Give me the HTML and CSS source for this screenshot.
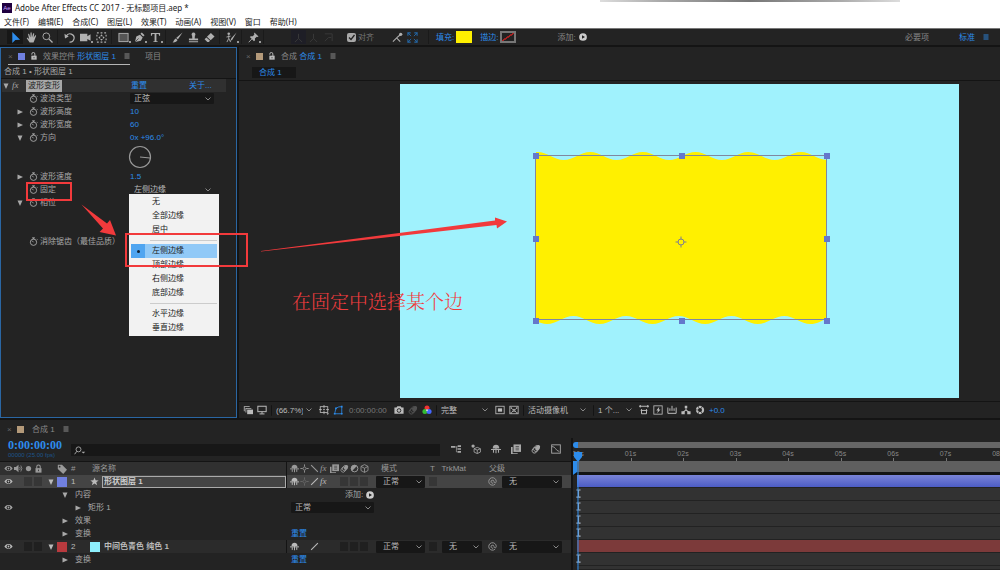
FILE: index.html
```
<!DOCTYPE html>
<html lang="zh-CN">
<head>
    <meta charset="UTF-8">
    <meta name="viewport" content="width=device-width, initial-scale=1.0">
    <title>Adobe After Effects CC 2017 - 无标题项目.aep *</title>
    <link rel="stylesheet" href="styles.css">
</head>
<body>
    <!-- Icon sprite -->
    <svg class="sprite" aria-hidden="true">
        <symbol id="i-arrow" viewBox="0 0 12 12"><path d="M2.500 0v12l3.300-3.200 5.200-.3z" fill="currentColor"/></symbol>
        <symbol id="i-hand" viewBox="0 0 12 12"><path d="M4 11.5L1 7.2c-.4-.8.6-1.3 1.2-.6L3.5 8 2.3 2.8c-.1-.9.9-1.1 1.2-.3L4.800 6 4.900 1c.1-.9 1.200-.9 1.300 0L6.500 5.800 7.800 1.700c.3-.8 1.300-.5 1.200.3L8.300 6.400l1.600-2.500c.5-.7 1.400-.2 1 .6L9.200 9l-1 2.500z" fill="currentColor"/></symbol>
        <symbol id="i-zoom" viewBox="0 0 12 12"><circle cx="4.700" cy="4.700" r="3.700" fill="none" stroke="currentColor"/><path d="M7.500 7.500l4 4" stroke="currentColor" stroke-width="1.500"/></symbol>
        <symbol id="i-rotate" viewBox="0 0 12 12"><path d="M2.500 4.500A4.500 4.500 0 1 1 6 11" fill="none" stroke="currentColor" stroke-width="1.300"/><path d="M.5 2l.6 5 4-2z" fill="currentColor"/></symbol>
        <symbol id="i-camera" viewBox="0 0 12 12"><path d="M0 2h8v2.500l3.500-2v7L8 7.500V10H0z" fill="currentColor"/></symbol>
        <symbol id="i-anchor" viewBox="0 0 12 12"><rect x="1" y="1" width="10" height="10" fill="none" stroke="currentColor" stroke-width="1.200" stroke-dasharray="2 2"/><path d="M6 2.500l1.500 2h-3zM6 9.500l1.500-2h-3zM2.500 6l2-1.500v3zM9.500 6l-2-1.500v3z" fill="currentColor"/></symbol>
        <symbol id="i-rect" viewBox="0 0 12 12"><rect x="1" y="1.500" width="10" height="9" fill="#555" stroke="currentColor"/></symbol>
        <symbol id="i-pen" viewBox="0 0 12 12"><path d="M1 11l1.500-6 4-2 3 3-2 3.500z" fill="currentColor"/><path d="M7 2l1.500-1.500 3 3L10 5z" fill="currentColor"/><path d="M1 11l4-4" stroke="#232323" stroke-width=".7"/></symbol>
        <symbol id="i-type" viewBox="0 0 12 12"><path d="M1 1h10v3h-1l-.6-1.700H7v7.700l1.500.4v.6h-5v-.6l1.500-.4V2.300H2.600L2 4H1z" fill="currentColor"/></symbol>
        <symbol id="i-brush" viewBox="0 0 12 12"><path d="M11.500.5L6.500 8 4.500 6.500zM4 7l2 1.700C5.500 10.800 3 11.500.5 11.300 2 10.500 2 8 4 7z" fill="currentColor"/></symbol>
        <symbol id="i-stamp" viewBox="0 0 12 12"><path d="M6 .5a2.200 2.200 0 0 1 1.500 3.700L7.300 7H11v2H1V7h3.700l-.2-2.800A2.200 2.200 0 0 1 6 .5zM1 10h10v1.200H1z" fill="currentColor"/></symbol>
        <symbol id="i-eraser" viewBox="0 0 12 12"><path d="M7.500 1l4 3.800L7.300 9 3.200 5.200z" fill="currentColor"/><path d="M2.600 5.900l4 3.700L5.200 11H3.600L.6 8z" fill="currentColor"/></symbol>
        <symbol id="i-roto" viewBox="0 0 12 12"><path d="M11.500.5L7.200 8l-3 2.500 1.800-4z" fill="currentColor"/><circle cx="3" cy="2" r="1.400" fill="currentColor"/><path d="M3 3.500V7L1 11M3 7l2 4M.5 5.500L5 4.500" stroke="currentColor" fill="none"/></symbol>
        <symbol id="i-pin" viewBox="0 0 12 12"><path d="M7 .5l4.500 4.300-1.300.6-.7-.3L7.500 7l.2 2L6.500 10 2 5.500l1-1 2.200.2L7 2.600l-.4-.8z" fill="currentColor"/><path d="M4.300 7.500L.8 11.200" stroke="currentColor"/></symbol>
        <symbol id="i-axes" viewBox="0 0 12 12"><path d="M6 2v5L2 11M6 7l4 4" stroke="currentColor" fill="none"/></symbol>
        <symbol id="i-world" viewBox="0 0 12 12"><path d="M2 2h8v8M2 10l4-4h3" stroke="currentColor" fill="none"/></symbol>
        <symbol id="i-snap" viewBox="0 0 12 12"><path d="M1 10.500L5 6.500l4 4M5 6.500L9 3" stroke="currentColor" stroke-width="1.200" fill="none"/><circle cx="9.500" cy="2.500" r="1.800" fill="currentColor"/></symbol>
        <symbol id="i-frame" viewBox="0 0 12 12"><path d="M1 4V1h3M8 1h3v3M11 8v3H8M4 11H1V8" fill="none" stroke="currentColor" stroke-width="1.200"/><path d="M1 1l3.500 3.500M11 1L7.500 4.500M1 11l3.500-3.500M11 11L7.500 7.500" stroke="currentColor"/></symbol>
        <symbol id="i-play" viewBox="0 0 12 12"><circle cx="6" cy="6" r="5.800" fill="currentColor"/><path d="M4.500 3.300v5.400L9 6z" fill="#232323"/></symbol>
        <symbol id="i-menu" viewBox="0 0 12 12"><path d="M1 2h10M1 6h10M1 10h10" stroke="currentColor" stroke-width="1.800"/></symbol>
        <symbol id="i-unlock" viewBox="0 0 12 12"><rect x="2" y="5.500" width="8" height="6" fill="currentColor"/><path d="M2.700 4V3a2.300 2.300 0 0 1 4.600 0v3" fill="none" stroke="currentColor" stroke-width="1.400"/><path d="M6 7.500v2" stroke="#232323"/></symbol>
        <symbol id="i-lock" viewBox="0 0 12 12"><rect x="2" y="5.500" width="8" height="6" fill="currentColor"/><path d="M3.700 6V3.500a2.300 2.300 0 0 1 4.600 0V6" fill="none" stroke="currentColor" stroke-width="1.400"/><path d="M6 7.500v2" stroke="#232323"/></symbol>
        <symbol id="i-right" viewBox="0 0 12 12"><path d="M1 1v10L12 6z" fill="currentColor"/></symbol>
        <symbol id="i-down" viewBox="0 0 12 12"><path d="M1 1h10L6 12z" fill="currentColor"/></symbol>
        <symbol id="i-watch" viewBox="0 0 12 12"><circle cx="6" cy="7" r="4.200" fill="none" stroke="currentColor" stroke-width="1.200"/><path d="M4 1.200h4M6 1v2M6 7L4 4.800M10.200 2.500l1 1" stroke="currentColor" stroke-width="1.200"/></symbol>
        <symbol id="i-layers" viewBox="0 0 12 12"><path d="M1 1.500h7v1H2v5H1z" fill="currentColor"/><path d="M3 3.500h7v1H4v4.500H3z" fill="currentColor"/><path d="M5 5.500h7V11H5z" fill="currentColor"/></symbol>
        <symbol id="i-monitor" viewBox="0 0 12 12"><rect x="1" y="1.500" width="10" height="6.500" fill="none" stroke="currentColor" stroke-width="1.200"/><path d="M6 8v2.500M3 10.700h6" stroke="currentColor" stroke-width="1.200"/></symbol>
        <symbol id="i-grid" viewBox="0 0 12 12"><rect x="1.500" y="2" width="9" height="7" fill="none" stroke="currentColor"/><path d="M6 0v4M6 7v4M0 5.500h3.500M8.500 5.500H12M4.800 5.500h2.400" stroke="currentColor"/><path d="M9 10h3l-1.500 2z" fill="currentColor"/></symbol>
        <symbol id="i-mask" viewBox="0 0 12 12"><path d="M2 10.500L3.500 4Q7 1.500 10.500 2v8.500z" fill="none" stroke="currentColor"/><path d="M1 9.500h2v2H1zM9.500 9.500h2v2h-2zM9.500 1h2v2h-2zM2.500 3h2v2h-2z" fill="currentColor"/></symbol>
        <symbol id="i-photo" viewBox="0 0 12 12"><path d="M.5 3H3l1-1.500h4L9 3h2.500v7.500H.5z" fill="currentColor"/><circle cx="6" cy="6.600" r="2.200" fill="none" stroke="#232323" stroke-width="1.100"/></symbol>
        <symbol id="i-blur" viewBox="0 0 12 12"><ellipse cx="4.500" cy="7.500" rx="3" ry="3.600" fill="none" stroke="currentColor" transform="rotate(35 4.500 7.500)"/><ellipse cx="6.500" cy="5.500" rx="3" ry="3.800" fill="none" stroke="currentColor" transform="rotate(35 6.500 5.500)"/><ellipse cx="8" cy="4.500" rx="2.400" ry="3.500" fill="currentColor" transform="rotate(35 8 4.500)"/></symbol>
        <symbol id="i-rgb" viewBox="0 0 12 12"><circle cx="6" cy="3.500" r="3" fill="#e33"/><circle cx="3.500" cy="7.700" r="3" fill="#3b3"/><circle cx="8.500" cy="7.700" r="3" fill="#46f"/><circle cx="6" cy="6.300" r="1.100" fill="#ddd"/></symbol>
        <symbol id="i-roi" viewBox="0 0 12 12"><rect x="1" y="1.500" width="10" height="9" fill="none" stroke="currentColor"/><rect x="3.500" y="4" width="5" height="4" fill="currentColor"/></symbol>
        <symbol id="i-checker" viewBox="0 0 12 12"><rect x="1" y="1.500" width="10" height="9" fill="none" stroke="currentColor"/><path d="M2 3l8 7M10 3l-8 7" stroke="currentColor" stroke-width="1.500" stroke-dasharray="2 1"/></symbol>
        <symbol id="i-aspect" viewBox="0 0 12 12"><path d="M0 1.500h12M1.500 0v3M10.500 0v3M2 6.500h8M3 5v5.500h6V5" fill="none" stroke="currentColor" stroke-width="1.200"/></symbol>
        <symbol id="i-fast" viewBox="0 0 12 12"><rect x="1" y="1" width="10" height="10" fill="none" stroke="currentColor"/><path d="M7.500 2L4 6.500h2L5 10l4-4.500H7z" fill="currentColor"/></symbol>
        <symbol id="i-chart" viewBox="0 0 12 12"><path d="M1 3v7h10V3M3.500 7V4M6 7V1M8.500 7V4" fill="none" stroke="currentColor" stroke-width="1.200"/></symbol>
        <symbol id="i-flow" viewBox="0 0 12 12"><path d="M4.500 1h3v3h-3zM.5 7.500h4V11h-4zM7.500 7.500h4V11h-4z" fill="currentColor"/><path d="M6 4v2L2.500 8.500M6 6l3.500 2.500" fill="none" stroke="currentColor" stroke-width="1.300"/></symbol>
        <symbol id="i-aperture" viewBox="0 0 12 12"><circle cx="6" cy="6" r="3.700" fill="none" stroke="currentColor" stroke-width="2.600" stroke-dasharray="3.200 .7"/></symbol>
        <symbol id="i-search" viewBox="0 0 16 12"><circle cx="6" cy="4.500" r="3.300" fill="none" stroke="currentColor" stroke-width="1.200"/><path d="M3.800 7L.8 11" stroke="currentColor" stroke-width="1.300"/><path d="M10 7.500h5L12.500 10z" fill="currentColor"/></symbol>
        <symbol id="i-mini" viewBox="0 0 12 12"><path d="M0 2.500h5v2H0zM8 1.500h4v2H8zM8 5h4v2H8zM8 8.500h4v2H8z" fill="currentColor"/><path d="M5 3.500h3M6.500 3v6.500H8M6.500 6H8" fill="none" stroke="currentColor" stroke-width=".8"/></symbol>
        <symbol id="i-draft" viewBox="0 0 12 12"><circle cx="2.500" cy="2.500" r="2" fill="currentColor"/><path d="M7.500 4l3.800 1.700v4L7.500 11.500 3.700 9.700v-4zM3.700 5.700l3.800 1.600 3.800-1.600M7.500 7.300v4.200" fill="none" stroke="currentColor"/></symbol>
        <symbol id="i-shy" viewBox="0 0 12 12"><path d="M2 5.500C2 2 4 1 6 1s4 1 4 4.500z" fill="currentColor"/><path d="M0 6.500h12M6 2v9M3 7v3.500M9 7v3.500" stroke="currentColor" stroke-width="1.300"/></symbol>
        <symbol id="i-blend" viewBox="0 0 12 12"><path d="M0 3.500h2V11h6v1H0z" fill="currentColor"/><rect x="3" y="0.500" width="9" height="9" fill="currentColor"/><path d="M5.500 3h4M5.500 5h4M5.500 7h4" stroke="#232323" stroke-width=".7"/></symbol>
        <symbol id="i-graph" viewBox="0 0 12 12"><rect x=".8" y="1" width="10.400" height="10" fill="none" stroke="currentColor" stroke-width="1.100"/><path d="M1 3c5 0 4 5 9 6" fill="none" stroke="currentColor"/></symbol>
        <symbol id="i-eye" viewBox="0 0 12 12"><path d="M.5 6C3 1.600 9 1.600 11.500 6 9 10.400 3 10.400.5 6z" fill="currentColor"/><circle cx="6" cy="6" r="2.500" fill="#232323"/><circle cx="6" cy="6" r="1.200" fill="currentColor"/></symbol>
        <symbol id="i-sound" viewBox="0 0 12 12"><path d="M0 4h2.500L6 1v10L2.500 8H0z" fill="currentColor"/><path d="M7.500 4q1.500 2 0 4M9 2q3 4 0 8" fill="none" stroke="currentColor"/></symbol>
        <symbol id="i-dot" viewBox="0 0 12 12"><circle cx="6" cy="6" r="3.500" fill="currentColor"/></symbol>
        <symbol id="i-tag" viewBox="0 0 12 12"><path d="M1 1h5l6 6-4.500 5L1 6z" fill="currentColor"/><circle cx="3.200" cy="3.200" r="1" fill="#303030"/></symbol>
        <symbol id="i-sun" viewBox="0 0 12 12"><circle cx="6" cy="6" r="2" fill="none" stroke="currentColor"/><path d="M6 .5v3M6 8.500v3M.5 6h3M8.500 6h3" stroke="currentColor" stroke-width="1.200"/></symbol>
        <symbol id="i-back" viewBox="0 0 12 12"><path d="M1.500 1.500l9 9" stroke="currentColor" stroke-width="1.500"/></symbol>
        <symbol id="i-slash" viewBox="0 0 12 12"><path d="M1.500 10.500l9-9" stroke="currentColor" stroke-width="1.500"/></symbol>
        <symbol id="i-half" viewBox="0 0 12 12"><circle cx="6" cy="6" r="4.500" fill="none" stroke="currentColor" stroke-width="1.300"/><path d="M9.200 2.800A4.500 4.500 0 0 0 2.800 9.200z" fill="currentColor"/></symbol>
        <symbol id="i-cube" viewBox="0 0 12 12"><path d="M6 .8l4.700 2.400v5.500L6 11.200 1.300 8.700V3.200zM1.300 3.200L6 5.700l4.700-2.500M6 5.700v5.500" fill="none" stroke="currentColor" stroke-width="1.100"/></symbol>
        <symbol id="i-star" viewBox="0 0 12 12"><path d="M6 .5l1.500 3.800 4 .2-3.100 2.600 1.100 4L6 8.800 2.500 11.100l1.100-4L.5 4.500l4-.2z" fill="currentColor"/></symbol>
        <symbol id="i-whip" viewBox="0 0 12 12"><path d="M9.500 9.500A5 5 0 1 1 11 6c0 2.500-3 2.500-3 0a2 2 0 1 0-1 2" fill="none" stroke="currentColor" stroke-width="1.200"/></symbol>
        <symbol id="i-key" viewBox="0 0 6 10"><path d="M.5.7h5M.5 9.300h5M3 .7v8.600" stroke="currentColor" stroke-width="1.300"/></symbol>
    </svg>

    <header class="titlebar">
        <span class="logo">Ae</span>
        <h1>Adobe After Effects CC 2017 - 无标题项目.aep *</h1>
        <span class="window-edge"></span>
    </header>
    <nav class="menubar">
        <a href="#">文件(F)</a>
        <a href="#">编辑(E)</a>
        <a href="#">合成(C)</a>
        <a href="#">图层(L)</a>
        <a href="#">效果(T)</a>
        <a href="#">动画(A)</a>
        <a href="#">视图(V)</a>
        <a href="#">窗口</a>
        <a href="#">帮助(H)</a>
    </nav>

    <!-- Tools -->
    <div class="toolbar">
        <div class="tools">
            <button class="tool active" aria-label="选取"><svg><use href="#i-arrow"/></svg></button>
            <button class="tool" aria-label="手形"><svg><use href="#i-hand"/></svg></button>
            <button class="tool" aria-label="缩放"><svg><use href="#i-zoom"/></svg></button>
        </div>
        <div class="tools">
            <button class="tool" aria-label="旋转"><svg><use href="#i-rotate"/></svg></button>
            <button class="tool more" aria-label="摄像机"><svg><use href="#i-camera"/></svg></button>
            <button class="tool" aria-label="锚点"><svg><use href="#i-anchor"/></svg></button>
        </div>
        <div class="tools">
            <button class="tool more" aria-label="矩形"><svg><use href="#i-rect"/></svg></button>
            <button class="tool more" aria-label="钢笔"><svg><use href="#i-pen"/></svg></button>
            <button class="tool more" aria-label="文字"><svg><use href="#i-type"/></svg></button>
        </div>
        <div class="tools">
            <button class="tool" aria-label="画笔"><svg><use href="#i-brush"/></svg></button>
            <button class="tool" aria-label="仿制图章"><svg><use href="#i-stamp"/></svg></button>
            <button class="tool" aria-label="橡皮擦"><svg><use href="#i-eraser"/></svg></button>
        </div>
        <div class="tools">
            <button class="tool more" aria-label="Roto 笔刷"><svg><use href="#i-roto"/></svg></button>
        </div>
        <div class="tools">
            <button class="tool more" aria-label="操控点"><svg><use href="#i-pin"/></svg></button>
        </div>
        <div class="tools dim">
            <button class="tool active" aria-label="本地轴"><svg><use href="#i-axes"/></svg></button>
            <button class="tool" aria-label="世界轴"><svg><use href="#i-axes"/></svg></button>
            <button class="tool" aria-label="视图轴"><svg><use href="#i-world"/></svg></button>
        </div>
        <label class="snap"><input type="checkbox" checked>对齐</label>
        <div class="tools snap-tools">
            <button class="tool" aria-label="边缘"><svg><use href="#i-snap"/></svg></button>
            <button class="tool blue" aria-label="框架"><svg><use href="#i-frame"/></svg></button>
        </div>
        <div class="paint">
            <a href="#">填充:</a>
            <button class="swatch fill" aria-label="填充颜色"></button>
        </div>
        <div class="paint">
            <a href="#">描边:</a>
            <button class="swatch stroke" aria-label="描边颜色"></button>
        </div>
        <button class="add">添加:<svg><use href="#i-play"/></svg></button>
        <div class="workspaces">
            <button>必要项</button>
            <button class="blue">标准</button>
            <button class="blue" aria-label="工作区菜单"><svg><use href="#i-menu"/></svg></button>
        </div>
    </div>

    <main class="panels">
        <!-- Effect controls -->
        <section class="effects">
            <div class="tabs">
                <div class="tab current">
                    <span class="close">×</span>
                    <span class="chip violet"></span>
                    <svg class="icon"><use href="#i-unlock"/></svg>
                    <span>效果控件 <b>形状图层 1</b></span>
                    <svg class="icon menu"><use href="#i-menu"/></svg>
                </div>
                <div class="tab">项目</div>
            </div>
            <p class="source">合成 1 • 形状图层 1</p>

            <div class="fx-head">
                <svg class="twirl"><use href="#i-down"/></svg>
                <i class="fx">fx</i>
                <span><span class="fx-name">波形变形</span></span>
                <a href="#">重置</a>
                <a href="#">关于...</a>
            </div>
            <div class="prop">
                <i></i><svg class="icon"><use href="#i-watch"/></svg>
                <label for="wave-type">波浪类型</label>
                <select id="wave-type"><option>正弦</option></select>
            </div>
            <div class="prop">
                <svg class="twirl"><use href="#i-right"/></svg><svg class="icon"><use href="#i-watch"/></svg>
                <span>波形高度</span><a href="#">10</a>
            </div>
            <div class="prop">
                <svg class="twirl"><use href="#i-right"/></svg><svg class="icon"><use href="#i-watch"/></svg>
                <span>波形宽度</span><a href="#">60</a>
            </div>
            <div class="prop">
                <svg class="twirl"><use href="#i-down"/></svg><svg class="icon"><use href="#i-watch"/></svg>
                <span>方向</span><a href="#">0x +96.0°</a>
            </div>
            <div class="dial-row">
                <svg class="dial" viewBox="0 0 24 24"><circle cx="12" cy="12" r="10.500"/><path d="M12 12l10 1"/></svg>
            </div>
            <div class="prop">
                <svg class="twirl"><use href="#i-right"/></svg><svg class="icon"><use href="#i-watch"/></svg>
                <span>波形速度</span><a href="#">1.5</a>
            </div>
            <div class="prop">
                <i></i><svg class="icon"><use href="#i-watch"/></svg>
                <label for="pinning">固定</label>
                <div class="dropdown">
                    <select id="pinning" class="open"><option>左侧边缘</option></select>
                    <ul class="popup" role="listbox">
                        <li role="option">无</li>
                        <li role="option">全部边缘</li>
                        <li role="option">居中</li>
                        <li class="line" role="separator"></li>
                        <li role="option" class="selected" aria-selected="true">左侧边缘</li>
                        <li role="option">顶部边缘</li>
                        <li role="option">右侧边缘</li>
                        <li role="option">底部边缘</li>
                        <li class="line" role="separator"></li>
                        <li role="option">水平边缘</li>
                        <li role="option">垂直边缘</li>
                    </ul>
                </div>
            </div>
            <div class="prop">
                <svg class="twirl"><use href="#i-down"/></svg><svg class="icon"><use href="#i-watch"/></svg>
                <span>相位</span>
            </div>
            <div class="dial-row"></div>
            <div class="prop">
                <i></i><svg class="icon"><use href="#i-watch"/></svg>
                <span>消除锯齿（最佳品质）</span>
            </div>
        </section>

        <!-- Composition viewer -->
        <section class="viewer">
            <div class="tabs">
                <div class="tab">
                    <span class="close">×</span>
                    <span class="chip tan"></span>
                    <svg class="icon"><use href="#i-unlock"/></svg>
                    <span>合成 <b>合成 1</b></span>
                    <svg class="icon menu"><use href="#i-menu"/></svg>
                </div>
            </div>
            <div class="crumbs"><button>合成 1</button></div>
            <div class="stage">
                <svg class="canvas" viewBox="0 0 559 314">
                    <clipPath id="shape-clip"><rect x="136" y="60" width="291" height="190"/></clipPath>
                    <path clip-path="url(#shape-clip)" fill="#fff000" d="M111 68h26.500
                        c9.600 0 16.750 8 26.350 8s16.750-8 26.350-8s16.750 8 26.350 8s16.750-8 26.350-8
                        s16.750 8 26.350 8s16.750-8 26.350-8s16.750 8 26.350 8s16.750-8 26.350-8
                        s16.750 8 26.350 8s16.750-8 26.350-8s16.750 8 26.350 8h9.500V232
                        c-9.600 0-16.750 8-26.350 8s-16.750-8-26.350-8s-16.750 8-26.350 8s-16.750-8-26.350-8
                        s-16.750 8-26.350 8s-16.750-8-26.350-8s-16.750 8-26.350 8s-16.750-8-26.350-8
                        s-16.750 8-26.350 8s-16.750-8-26.350-8s-16.750 8-26.350 8s-16.750-8-26.350-8H111z"/>
                    <rect class="bounds" x="135.500" y="71.500" width="291" height="164"/>
                    <g fill="#6478cc">
                        <rect x="133" y="69" width="6" height="6"/><rect x="279" y="69" width="6" height="6"/><rect x="424" y="69" width="6" height="6"/>
                        <rect x="133" y="152" width="6" height="6"/><rect x="424" y="152" width="6" height="6"/>
                        <rect x="133" y="234" width="6" height="6"/><rect x="279" y="234" width="6" height="6"/><rect x="424" y="234" width="6" height="6"/>
                    </g>
                    <g class="anchor"><circle cx="281" cy="158" r="3"/><path d="M281 152.500v3M281 160.500v3M275.500 158h3M283.500 158h3"/></g>
                </svg>
            </div>
            <div class="viewbar">
                <svg class="icon"><use href="#i-layers"/></svg>
                <svg class="icon"><use href="#i-monitor"/></svg>
                <select class="zoom" aria-label="放大率"><option>(66.7%)</option></select>
                <svg class="icon"><use href="#i-grid"/></svg>
                <svg class="icon blue"><use href="#i-mask"/></svg>
                <span class="time">0:00:00:00</span>
                <svg class="icon"><use href="#i-photo"/></svg>
                <svg class="icon off"><use href="#i-blur"/></svg>
                <svg class="icon"><use href="#i-rgb"/></svg>
                <select class="quality" aria-label="分辨率"><option>完整</option></select>
                <svg class="icon"><use href="#i-roi"/></svg>
                <svg class="icon"><use href="#i-checker"/></svg>
                <select class="camera" aria-label="3D 视图"><option>活动摄像机</option></select>
                <select class="views" aria-label="视图布局"><option>1 个...</option></select>
                <svg class="icon"><use href="#i-aspect"/></svg>
                <svg class="icon"><use href="#i-fast"/></svg>
                <svg class="icon"><use href="#i-chart"/></svg>
                <svg class="icon"><use href="#i-flow"/></svg>
                <svg class="icon"><use href="#i-aperture"/></svg>
                <a href="#">+0.0</a>
            </div>
        </section>
    </main>

    <!-- Timeline -->
    <section class="timeline">
        <div class="tabs">
            <div class="tab">
                <span class="close">×</span>
                <span class="chip tan"></span>
                <span class="name">合成 1</span>
                <svg class="icon menu"><use href="#i-menu"/></svg>
            </div>
        </div>
        <div class="timeline-body">
            <div class="layers">
                <div class="layer-tools">
                    <div class="clock"><strong>0:00:00:00</strong><small>00000 (25.00 fps)</small></div>
                    <label class="search"><svg><use href="#i-search"/></svg><input type="text" aria-label="搜索"></label>
                    <div class="switches">
                        <svg class="icon"><use href="#i-mini"/></svg>
                        <svg class="icon"><use href="#i-draft"/></svg>
                        <svg class="icon"><use href="#i-shy"/></svg>
                        <svg class="icon"><use href="#i-blend"/></svg>
                        <svg class="icon"><use href="#i-blur"/></svg>
                        <svg class="icon"><use href="#i-graph"/></svg>
                    </div>
                </div>
                <div class="layer head">
                    <div class="av"><svg><use href="#i-eye"/></svg><svg><use href="#i-sound"/></svg><svg><use href="#i-dot"/></svg><svg><use href="#i-lock"/></svg></div>
                    <div></div>
                    <div><svg class="icon"><use href="#i-tag"/></svg></div>
                    <div class="num">#</div>
                    <div class="name">源名称</div>
                    <div class="modes">
                        <svg><use href="#i-shy"/></svg><svg><use href="#i-sun"/></svg><svg><use href="#i-back"/></svg><i class="fx">fx</i>
                        <svg><use href="#i-blend"/></svg><svg><use href="#i-blur"/></svg><svg><use href="#i-half"/></svg><svg><use href="#i-cube"/></svg>
                    </div>
                    <div class="label">模式</div>
                    <div class="label">T&nbsp;&nbsp; TrkMat</div>
                    <div class="label">父级</div>
                </div>

                <div class="layer selected">
                    <div class="av"><svg><use href="#i-eye"/></svg><i></i><i class="box"></i><i class="box"></i></div>
                    <div><svg class="twirl"><use href="#i-down"/></svg></div>
                    <div><span class="color violet"></span></div>
                    <div class="num">1</div>
                    <div class="name"><svg class="icon"><use href="#i-star"/></svg><input type="text" value="形状图层 1" aria-label="图层名称"></div>
                    <div class="modes">
                        <svg><use href="#i-shy"/></svg><svg class="off"><use href="#i-sun"/></svg><svg><use href="#i-slash"/></svg><i class="fx">fx</i>
                        <i></i><i class="box"></i><i class="box"></i><i class="box"></i>
                    </div>
                    <select aria-label="模式"><option>正常</option></select>
                    <div class="matte"><i class="box"></i></div>
                    <div class="parent"><svg class="icon"><use href="#i-whip"/></svg><select aria-label="父级"><option>无</option></select></div>
                </div>
                <div class="sub">
                    <span></span>
                    <div><svg class="twirl"><use href="#i-down"/></svg>内容</div>
                    <button class="add">添加:<svg><use href="#i-play"/></svg></button>
                </div>
                <div class="sub">
                    <span><svg class="icon"><use href="#i-eye"/></svg></span>
                    <div class="deep"><svg class="twirl"><use href="#i-right"/></svg>矩形 1</div>
                    <select aria-label="混合模式"><option>正常</option></select>
                </div>
                <div class="sub">
                    <span></span>
                    <div><svg class="twirl"><use href="#i-right"/></svg>效果</div>
                </div>
                <div class="sub">
                    <span></span>
                    <div><svg class="twirl"><use href="#i-right"/></svg>变换</div>
                    <a href="#">重置</a>
                </div>
                <div class="layer">
                    <div class="av"><svg><use href="#i-eye"/></svg><i></i><i class="box"></i><i class="box"></i></div>
                    <div><svg class="twirl"><use href="#i-down"/></svg></div>
                    <div><span class="color red"></span></div>
                    <div class="num">2</div>
                    <div class="name"><span class="color cyan"></span><b>中间色青色 纯色 1</b></div>
                    <div class="modes">
                        <svg><use href="#i-shy"/></svg><i></i><svg><use href="#i-slash"/></svg><i></i>
                        <i></i><i class="box"></i><i class="box"></i><i class="box"></i>
                    </div>
                    <select aria-label="模式"><option>正常</option></select>
                    <div class="matte"><i class="box"></i><select aria-label="轨道遮罩"><option>无</option></select></div>
                    <div class="parent"><svg class="icon"><use href="#i-whip"/></svg><select aria-label="父级"><option>无</option></select></div>
                </div>
                <div class="sub">
                    <span></span>
                    <div><svg class="twirl"><use href="#i-right"/></svg>变换</div>
                    <a href="#">重置</a>
                </div>
            </div>

            <div class="tracks">
                <div class="navigator"></div>
                <div class="ruler">
                    <span><b>00s</b></span><span><b>01s</b></span><span><b>02s</b></span><span><b>03s</b></span><span><b>04s</b></span>
                    <span><b>05s</b></span><span><b>06s</b></span><span><b>07s</b></span><span class="last"><b>08</b></span>
                </div>
                <div class="workarea"></div>
                <div class="track clip-violet"></div>
                <div class="track"><svg><use href="#i-key"/></svg></div>
                <div class="track"><svg><use href="#i-key"/></svg></div>
                <div class="track"><svg><use href="#i-key"/></svg></div>
                <div class="track"><svg><use href="#i-key"/></svg></div>
                <div class="track clip-red"></div>
                <div class="track"><svg><use href="#i-key"/></svg></div>
                <div class="track rest"></div>
                <svg class="playhead" viewBox="0 0 10 120" preserveAspectRatio="none"><path d="M1 1h8v5L5 11 1 6z"/><path d="M4.500 8h1v112h-1z"/></svg>
            </div>
        </div>
    </section>

    <!-- Tutorial marks over the workspace -->
    <svg class="marks" viewBox="0 0 1000 570" aria-hidden="true">
        <rect x="27" y="183" width="44" height="17"/>
        <rect x="126" y="234" width="121" height="32"/>
        <path d="M81.500 204.500l25.500 19 3-3.500 6 15.500-16.500-3.500 3.500-3.500z"/>
        <path d="M261 251l234-30.500v-3l12 4-10 7-.5-3.500-235.500 26.500z"/>
    </svg>
    <p class="note">在固定中选择某个边</p>
</body>
</html>
```

FILE: styles.css
```
:root {
    --bg: #232323;
    --dark: #171717;
    --line: #141414;
    --text: #a8a8a8;
    --blue: #2d8ceb;
    --row: 13px;
}

* {
    margin: 0;
    padding: 0;
    box-sizing: border-box;
}

body {
    display: flex;
    flex-direction: column;
    min-height: 100vh;
    position: relative;
    overflow: hidden;
    background: var(--bg);
    color: var(--text);
    font: 8px/13px "Liberation Sans", "Noto Sans CJK SC", sans-serif;
}

a {
    color: var(--blue);
    text-decoration: none;
}

b {
    font-weight: normal;
}

button,
input,
select {
    border: 0;
    background: none;
    color: inherit;
    font: inherit;
}

svg {
    display: block;
    flex: none;
}

select {
    appearance: none;
    height: 11px;
    line-height: 11px;
    padding: 0 12px 0 4px;
    border-radius: 1px;
    background: var(--dark) url("data:image/svg+xml,%3Csvg xmlns='http://www.w3.org/2000/svg' viewBox='0 0 6 4'%3E%3Cpath d='M.5.5L3 3 5.500.5' fill='none' stroke='%23888'/%3E%3C/svg%3E") no-repeat right 3px center / 6px 4px;
    color: #bbb;
}

.sprite {
    position: absolute;
    width: 0;
    height: 0;
}

.icon {
    width: 10px;
    height: 10px;
}

.twirl {
    width: 6px;
    height: 6px;
}

.blue {
    color: var(--blue);
}

.off {
    opacity: 0.3;
}

.fx {
    font: italic 9px/13px "Liberation Serif", serif;
}

/* Title and menu */
.titlebar {
    display: flex;
    align-items: center;
    height: 15px;
    padding-left: 2px;
    gap: 3px;
    background: #fff;
    color: #222;
}

.titlebar h1 {
    font: 8px/14px "Noto Sans", "Noto Sans CJK SC", sans-serif;
}

.logo {
    width: 10px;
    height: 10px;
    background: #1f0040;
    color: #c9a0ff;
    font-size: 6px;
    line-height: 10px;
    text-align: center;
}

.window-edge {
    position: absolute;
    top: 0;
    left: 60%;
    width: 30%;
    height: 2px;
    background: linear-gradient(to right, #ddd, #aaa 20%, #777 50%, #aaa 80%, #ddd);
}

.menubar {
    display: flex;
    gap: 9px;
    height: 13px;
    padding-left: 4px;
    background: #fff;
    font-family: "Noto Sans", "Noto Sans CJK SC", sans-serif;
}

.menubar a {
    color: #222;
}

/* Toolbar */
.toolbar {
    display: flex;
    align-items: center;
    height: 19px;
    padding-left: 7px;
    border-top: 1px solid #777;
    border-bottom: 2px solid var(--line);
}

.tools {
    display: flex;
    padding-right: 2px;
    margin-right: 3px;
    border-right: 1px solid #1a1a1a;
}

.tool {
    position: relative;
    display: flex;
    align-items: center;
    justify-content: center;
    width: 16px;
    height: 14px;
    color: #b0b0b0;
}

.tool svg {
    width: 11px;
    height: 11px;
}

.tool.active {
    background: var(--dark);
    color: var(--blue);
}

.tool.blue {
    color: #2468a8;
}

.tool.more::after {
    content: "";
    position: absolute;
    right: 0;
    bottom: 1px;
    width: 2px;
    height: 2px;
    background: #999;
}

.tools.dim {
    margin: 0 9px 0 24px;
    border: 0;
}

.dim .tool,
.dim .tool.active {
    width: 15px;
    color: #3a3a3a;
}

.dim .tool.active {
    background: #1e1e26;
}

.snap {
    display: flex;
    align-items: center;
    gap: 2px;
    color: #777;
}

.snap input {
    appearance: none;
    width: 9px;
    height: 9px;
    border-radius: 2px;
    background: #a8a8a8 url("data:image/svg+xml,%3Csvg xmlns='http://www.w3.org/2000/svg' viewBox='0 0 9 9'%3E%3Cpath d='M2 4.500L4 6.500 7.500 2' fill='none' stroke='%23222' stroke-width='1.300'/%3E%3C/svg%3E");
}

.snap-tools {
    margin: 0 7px 0 16px;
    padding-right: 8px;
}

.snap-tools .tool {
    width: 15px;
}

.paint {
    display: flex;
    align-items: center;
    gap: 2px;
    margin-right: 8px;
}

.swatch {
    width: 16px;
    height: 12px;
}

.swatch.fill {
    background: #fff000;
}

.swatch.stroke {
    border: 2px solid #777;
    background: linear-gradient(to top left, #222 44%, #a22 45%, #a22 55%, #222 56%);
}

.add {
    display: flex;
    align-items: center;
    gap: 3px;
    color: var(--text);
}

.add svg {
    width: 8px;
    height: 8px;
    color: #ccc;
}

.toolbar .add {
    margin-left: 33px;
    color: #888;
}

.workspaces {
    display: flex;
    align-items: center;
    gap: 8px;
    margin-left: auto;
    padding-right: 11px;
    color: #888;
}

.workspaces button:first-child {
    margin-right: 22px;
}

.workspaces svg {
    width: 6px;
    height: 6px;
}

/* Panels */
.panels {
    display: flex;
    gap: 2px;
    background: var(--line);
}

.effects {
    width: 237px;
    border: 1px solid #2a66a3;
    background: var(--bg);
}

.viewer {
    flex: 1;
    min-width: 0;
    background: var(--bg);
}

.tabs {
    display: flex;
    gap: 15px;
    height: 18px;
    padding-left: 7px;
}

.tab {
    display: flex;
    align-items: center;
    height: 18px;
    color: #888;
}

.effects .tab {
    height: 17px;
}

.tab.current {
    border-bottom: 1px solid #b5b5b5;
}

.tab b {
    color: var(--blue);
}

.tab .icon {
    width: 8px;
    height: 8px;
    margin-right: 5px;
    color: #bbb;
}

.tab .icon.menu {
    width: 6px;
    height: 6px;
    margin: 0 0 0 8px;
    color: #999;
}

.close {
    width: 10px;
    color: #666;
}

.chip {
    width: 7px;
    height: 7px;
    margin-right: 5px;
}

.violet {
    background: #7080e0;
}

.tan {
    background: #b49a7a;
}

.red {
    background: #b83a3e;
}

.cyan {
    background: #8eeffc;
}

/* Effect controls */
.source {
    height: 14px;
    padding-left: 3px;
    border-bottom: 1px solid var(--line);
}

.effects .tabs {
    height: 17px;
}

.fx-head {
    display: grid;
    grid-template-columns: 9px 14px 105px 58px 1fr;
    align-items: center;
    height: var(--row);
    margin: 0 10px 0 1px;
    padding-left: 1px;
    background: #303030;
}

.fx-name {
    display: inline-block;
    padding: 0 2px;
    height: 12px;
    line-height: 12px;
    background: #a8a8a8;
    color: #222;
}

.prop {
    display: grid;
    grid-template-columns: 16px 12px 11px 90px 84px;
    align-items: center;
    height: var(--row);
    white-space: nowrap;
}

.prop > :first-child {
    grid-column: 2;
}

.prop > .icon {
    width: 9px;
    height: 9px;
}

.dial-row {
    height: 26px;
    padding: 1px 0 0 127px;
}

.dial {
    width: 24px;
    height: 24px;
    fill: none;
    stroke: #999;
    stroke-width: 1.2;
}

.dropdown {
    position: relative;
    height: 11px;
}

.prop select {
    display: block;
    width: 84px;
}

.prop select.open {
    background-color: var(--bg);
}

.popup {
    position: absolute;
    z-index: 1;
    top: 10px;
    left: -1px;
    width: 90px;
    padding: 1px;
    background: #f2f2f2;
    color: #222;
    list-style: none;
}

.popup li {
    height: 14px;
    margin: 0 1px;
    padding-left: 21px;
    line-height: 14px;
}

.popup .line {
    height: 1px;
    margin: 3px 1px 3px 20px;
    background: #ccc;
}

.popup .selected {
    position: relative;
    background: linear-gradient(to right, #50a5f0 14px, #91c9f7 14px);
}

.popup .selected::before {
    content: "";
    position: absolute;
    left: 6px;
    top: 6px;
    width: 3px;
    height: 3px;
    border-radius: 50%;
    background: #123;
}

/* Composition viewer */
.crumbs {
    height: 16px;
    padding: 2px 0 0 13px;
    border-bottom: 1px solid var(--line);
}

.crumbs button {
    display: block;
    width: 44px;
    height: 11px;
    padding-left: 7px;
    background: var(--dark);
    color: var(--blue);
    line-height: 11px;
    text-align: left;
}

.stage {
    padding: 3px 41px 3px 161px;
}

.canvas {
    width: 100%;
    height: auto;
    background: #a0f2fd;
}

.bounds {
    fill: none;
    stroke: #8088a0;
}

.anchor {
    fill: none;
    stroke: #80808c;
}

.viewbar {
    display: flex;
    align-items: center;
    gap: 4px;
    height: 17px;
    padding-left: 4px;
    border-top: 1px solid var(--line);
    color: #bbb;
}

.viewbar select {
    background-color: var(--bg);
    border-left: 1px solid var(--line);
}

.viewbar .zoom {
    width: 44px;
}

.viewbar .time {
    width: 43px;
    padding-left: 2px;
    color: #777;
}

.viewbar .quality {
    width: 55px;
}

.viewbar .camera {
    width: 66px;
}

.viewbar .views {
    width: 42px;
}

/* Timeline */
.timeline {
    display: flex;
    flex-direction: column;
    flex: 1;
    border-top: 2px solid var(--line);
}

.timeline .name {
    margin-left: 3px;
}

.timeline-body {
    display: flex;
    flex: 1;
}

.layers {
    width: 573px;
    border-right: 2px solid var(--line);
}

.layer-tools {
    display: flex;
    height: 24px;
    padding: 1px 10px 0 8px;
    border-bottom: 1px solid var(--line);
}

.clock {
    width: 63px;
    color: var(--blue);
    white-space: nowrap;
}

.clock strong {
    display: block;
    font: bold 12px/13px "Liberation Serif", serif;
}

.clock small {
    display: block;
    color: #1d558c;
    font-size: 6px;
    line-height: 7px;
}

.search {
    display: flex;
    align-items: center;
    width: 369px;
    height: 12px;
    margin-top: 5px;
    padding-left: 3px;
    background: var(--dark);
}

.search svg {
    width: 12px;
    height: 9px;
}

.search input {
    flex: 1;
    height: 12px;
    outline: 0;
}

.switches {
    display: flex;
    flex: 1;
    justify-content: space-between;
    padding: 5px 0 0 11px;
}

.layer {
    display: grid;
    grid-template-columns: 45px 12px 12px 18px 200px 89px 49px 59px 78px;
    align-items: center;
    height: var(--row);
    background: #2b2b2b;
    color: #bbb;
}

.layer.head {
    background: #303030;
    color: #999;
}

.layer.selected {
    background: #444;
}

.av {
    display: grid;
    grid-template-columns: repeat(4, 10px);
    padding-left: 4px;
}

.av svg,
.modes svg {
    width: 9px;
    height: 9px;
}

.box {
    width: 8px;
    height: 9px;
    background: #202020;
}

.selected .box {
    background: #363636;
}

.layer .twirl {
    margin-left: 3px;
}

.color {
    display: block;
    width: 10px;
    height: 10px;
}

.num {
    padding-left: 2px;
}

.layer .name {
    display: flex;
    align-items: center;
    gap: 3px;
    height: var(--row);
    border-right: 1px solid var(--line);
}

.layer.head .name {
    padding-left: 2px;
}

.name .icon {
    width: 9px;
    height: 9px;
}

.name input {
    width: 100%;
    height: 12px;
    padding-left: 1px;
    border: 1px solid #aaa;
    color: #ccc;
    font-weight: bold;
}

.name b {
    margin-left: 1px;
    font-weight: bold;
}

.modes {
    display: grid;
    grid-template-columns: repeat(8, 10px);
    padding-left: 3px;
}

.modes .fx {
    line-height: 9px;
}

.label {
    padding-left: 5px;
    white-space: pre;
}

.layer select {
    height: 12px;
    padding-left: 7px;
}

.matte,
.parent {
    display: flex;
    align-items: center;
    gap: 5px;
    padding-left: 4px;
}

.matte select {
    flex: 1;
    margin-right: 2px;
}

.parent select {
    flex: 1;
}

.parent .icon {
    width: 9px;
    height: 9px;
    color: #999;
}

.sub {
    display: grid;
    grid-template-columns: 62px 229px 1fr;
    align-items: center;
    height: var(--row);
}

.sub span {
    padding-left: 4px;
}

.sub .icon {
    width: 9px;
    height: 9px;
}

.sub div {
    display: flex;
    align-items: center;
    gap: 7px;
}

.sub .deep {
    padding-left: 13px;
}

.sub .add {
    padding-left: 54px;
}

.sub select {
    width: 83px;
}

/* Tracks */
.tracks {
    position: relative;
    display: flex;
    flex-direction: column;
    flex: 1;
    min-width: 0;
    overflow: hidden;
    padding-top: 4px;
}

.navigator {
    height: 6px;
    border-left: 5px solid var(--blue);
    border-radius: 3px 0 0 3px;
    background: #666;
}

.ruler {
    display: flex;
    height: 13px;
    margin: 0 2px 0 5px;
    color: #888;
    font-size: 7px;
    line-height: 11px;
}

.ruler span {
    flex: 1;
    background: linear-gradient(#777, #777) no-repeat left bottom / 1px 3px;
}

.ruler .last {
    flex: none;
    width: 0;
}

.ruler b {
    display: block;
    width: 20px;
    margin-left: -10px;
    text-align: center;
}

.ruler .last b {
    width: 12px;
    text-align: right;
}

.workarea {
    height: 14px;
    border-left: 4px solid var(--blue);
    border-bottom: 3px solid var(--line);
    background: #5f5f5f;
}

.track {
    height: var(--row);
    margin-left: 4px;
    border-bottom: 1px solid #222;
    background: #323232;
}

.track svg {
    width: 5px;
    height: 9px;
    margin: 1px 0 0 -1px;
    color: #aab4c0;
}

.track.rest {
    flex: 1;
}

.clip-violet {
    background: linear-gradient(#7a84d8, #4c5cc4);
}

.clip-red {
    background: #7c3a3a;
}

.playhead {
    position: absolute;
    top: 13px;
    left: 0;
    width: 10px;
    height: 120px;
    fill: var(--blue);
}

/* Marks */
.marks {
    position: absolute;
    z-index: 2;
    top: 0;
    left: 0;
    width: 1000px;
    height: 570px;
    fill: #f23a3c;
    pointer-events: none;
}

.marks rect {
    fill: none;
    stroke: #f23a3c;
    stroke-width: 2;
}

.note {
    position: absolute;
    z-index: 2;
    top: 289px;
    left: 292px;
    color: #f03c3e;
    font: 300 19px/24px "Noto Serif CJK SC", "Noto Sans CJK SC", sans-serif;
}
```
